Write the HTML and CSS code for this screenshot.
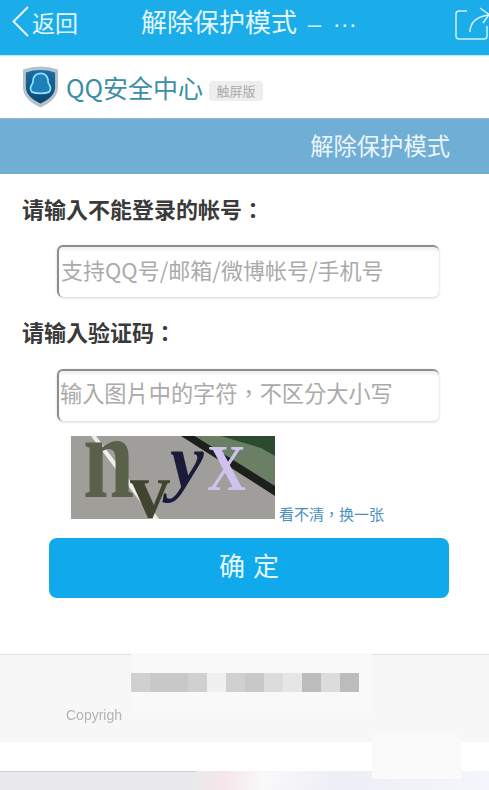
FILE: index.html
```html
<!DOCTYPE html>
<html lang="zh-CN">
<head>
<meta charset="utf-8">
<title>解除保护模式</title>
<link rel="stylesheet" href="styles.css">
</head>
<body>
<div class="page">
  <header class="topbar">
    <a class="back">
      <svg class="back-icon" viewBox="0 0 20 36"><path d="M17 3 L2.500 17.500 L17 32"/></svg>
      <span>返回</span>
    </a>
    <h1 class="title">解除保护模式 <span class="title-tail">– ···</span></h1>
    <svg class="share" viewBox="0 0 36 36"><path d="M13 4 H5 Q2 4 2 7 V29 Q2 32 5 32 H30 Q33 32 33 29 V19"/><path d="M16 25 Q16 11 34 8"/><path d="M26 1 L35 7.500 L29 16"/></svg>
  </header>

  <div class="brand">
    <svg class="shield" viewBox="0 0 40 44">
      <defs>
        <linearGradient id="sg" x1="0" y1="0" x2="0" y2="1"><stop offset="0" stop-color="#1a6ea6"/><stop offset="1" stop-color="#0b4670"/></linearGradient>
      </defs>
      <path d="M2 4 Q20 -2 38 4 V22 Q38 35 20 43 Q2 35 2 22 Z" fill="#b4c2c9"/>
      <path d="M5 7 Q20 2 35 7 V22 Q35 32 20 39 Q5 32 5 22 Z" fill="url(#sg)"/>
      <path d="M20 8 C13 8 12 14 12 18 C10 21 9 25 11 27 C15 29 25 29 29 27 C31 25 30 21 28 18 C28 14 27 8 20 8 Z" fill="#1f7fb8" stroke="#8fe0fa" stroke-width="1.800"/>
    </svg>
    <span class="brand-name">QQ安全中心</span>
    <span class="brand-tag">触屏版</span>
  </div>

  <div class="section-bar">解除保护模式</div>

  <main class="form">
    <label class="label label-first" lang="zh-Hant">请输入不能登录的帐号：</label>
    <input class="field" type="text" placeholder="支持QQ号/邮箱/微博帐号/手机号">
    <label class="label label-second" lang="zh-Hant">请输入验证码：</label>
    <input class="field field-second" lang="zh-Hant" type="text" placeholder="输入图片中的字符，不区分大小写">
    <div class="captcha-row">
      <svg class="captcha" viewBox="0 0 204 83" preserveAspectRatio="none">
        <rect width="204" height="83" fill="#a09e9a"/>
        <path d="M125 0 H204 V52 Z" fill="#6a7f64"/>
        <path d="M150 0 H204 V20 L190 12 Z" fill="#2c4a32"/>
        <path d="M110 0 H124 L204 50 V60 Z" fill="#1d1f1c"/>
        <path d="M20 0 H25 L88 83 H82 Z" fill="#eeeeea"/>
        <text class="cap cap-n" transform="translate(12 61) scale(1 1.280)">n</text>
        <text class="cap cap-v" x="59" y="81">v</text>
        <text class="cap cap-y" x="99" y="51">y</text>
        <text class="cap cap-x" transform="translate(136 54) scale(.830 1)">X</text>
      </svg>
      <a class="refresh" lang="zh-Hant">看不清，换一张</a>
    </div>
    <button class="submit" type="button">确 定</button>
  </main>

  <footer class="footer">
    <div class="smear"></div>
    <div class="pixels">
      <i class="p3"></i><i class="p2"></i><i class="p2"></i><i class="p3"></i><i class="p6"></i><i class="p3"></i><i class="p2"></i><i class="p4"></i><i class="p5"></i><i class="p1"></i><i class="p4"></i><i class="p1"></i>
    </div>
    <div class="copyright">Copyrigh</div>
    <div class="smear-low"></div>
  </footer>
  <div class="gap"></div>
  <div class="bottom"></div>
</div>
</body>
</html>
```

FILE: styles.css
```css
* { box-sizing: border-box; }
html, body { margin: 0; padding: 0; background: #fff; }
body {
  width: 489px;
  height: 790px;
  overflow: hidden;
  font-family: "Noto Sans CJK SC", "Liberation Sans", sans-serif;
}
.page { width: 489px; height: 790px; filter: blur(0.5px); }

.topbar {
  height: 56px;
  background: #1bacea;
  color: #e4f6fd;
  display: flex;
  align-items: center;
  padding: 0 0 11px 11px;
  position: relative;
  border-bottom: 1px solid #bfe9fa;
}
.back { display: flex; align-items: center; font-size: 23px; line-height: 30px; }
.back-icon { width: 20px; height: 36px; margin-right: 1px; fill: none; stroke: #e4f6fd; stroke-width: 2; }
.title { margin: 0 0 0 63px; font-size: 26px; font-weight: 400; line-height: 34px; white-space: nowrap; }
.title-tail { margin-left: 5px; font-family: "Liberation Sans", sans-serif; font-size: 24px; word-spacing: 5px; }
.share { width: 36px; height: 36px; margin-left: auto; margin-right: -1px; margin-top: 6px; fill: none; stroke: #d4f0fb; stroke-width: 1.500; }

.brand {
  height: 63px;
  display: flex;
  align-items: center;
  padding-left: 21px;
  background: #fff;
  border-bottom: 1px solid #9fb6c4;
}
.shield { width: 39px; height: 44px; flex: none; }
.brand-name { margin-left: 6px; font-size: 25px; line-height: 30px; color: #3c8da6; white-space: nowrap; }
.brand-tag {
  margin: 7px 0 0 6px;
  width: 54px;
  height: 20px;
  border-radius: 4px;
  background: #eee;
  color: #aaa;
  font-size: 13px;
  line-height: 20px;
  text-align: center;
}

.section-bar {
  height: 55px;
  background: #6fafd6;
  color: #eef5fa;
  font-size: 23.300px;
  line-height: 52px;
  text-align: right;
  padding-right: 39px;
}

.form { display: flex; flex-direction: column; align-items: flex-start; background: #fff; }
.label { display: block; margin-left: 22px; font-family: "Noto Sans CJK TC", sans-serif; font-size: 22px; line-height: 30px; font-weight: 700; color: #3a3a3a; white-space: nowrap; }
.label-first { margin-top: 19px; }
.label-second { margin-top: 19px; }
.field {
  display: block;
  width: 382px;
  height: 52px;
  margin: 22px 0 0 57px;
  padding: 0 0 6px 2px;
  border: 0;
  border-top: 2px solid #8e8e8e;
  border-left: 2px solid #8e8e8e;
  border-radius: 6px;
  box-shadow: 0 1px 3px rgba(0,0,0,.18), inset 0 3px 3px rgba(0,0,0,.06);
  background: #fff;
  font-family: inherit;
  font-size: 22px;
  color: #333;
  outline: none;
}
.field-second { margin-top: 23px; padding: 0 0 9px 1px; font-family: "Noto Sans CJK TC", sans-serif; font-size: 22.200px; }
.field::placeholder { color: #aaa; opacity: 1; }

.captcha-row { display: flex; align-items: flex-end; margin: 15px 0 0 71px; }
.captcha { width: 204px; height: 83px; display: block; overflow: visible; }
.cap { font-family: "Liberation Serif", serif; font-weight: 700; }
.cap-n { font-size: 92px; fill: #5a614a; }
.cap-v { font-size: 80px; fill: #41452f; }
.cap-y { font-size: 76px; fill: #1a1a3a; font-style: italic; }
.cap-x { font-size: 65px; fill: #cfc2ee; }
.refresh { margin: 0 0 -5px 4px; font-family: "Noto Sans CJK TC", sans-serif; font-size: 15px; line-height: 20px; color: #4a8fc0; white-space: nowrap; }

.submit {
  display: block;
  width: 400px;
  height: 60px;
  margin: 19px 0 0 49px;
  border: 0;
  border-radius: 8px;
  background: #0fa9ec;
  color: #e6f7fe;
  font-family: inherit;
  font-size: 26px;
  padding: 0 0 8px;
  word-spacing: 2px;
}

.footer {
  position: relative;
  height: 88px;
  margin-top: 56px;
  background: #f7f7f7;
  border-top: 1px solid #dedede;
  padding-top: 18px;
}
.smear { position: absolute; left: 131px; right: 117px; top: -2px; height: 60px; background: #f9f9f9; }
.smear-low { position: absolute; left: 372px; width: 90px; top: 80px; height: 44px; background: #fafafa; z-index: 1; }
.pixels { position: relative; display: flex; width: 228px; height: 19px; margin-left: 131px; }
.pixels i { display: block; flex: 1; }
.p1 { background: #bcbcbc; }
.p2 { background: #c8c8c8; }
.p3 { background: #d0d0d0; }
.p4 { background: #dcdcdc; }
.p5 { background: #e6e6e6; }
.p6 { background: #f0f0f0; }
.copyright { position: relative; margin: 14px 0 0 66px; font-family: "Liberation Sans", sans-serif; font-size: 14px; line-height: 18px; color: #b4b4b4; }

.gap { height: 29px; background: #fff; }
.bottom {
  height: 19px;
  background:
    linear-gradient(#cfcfd2, #cfcfd2) no-repeat 0 0 / 195px 1px,
    linear-gradient(100deg, #e9e9eb 0 40%, #f6e6ea 46%, #f9f9fa 54%, #eeeef6 68%, #f3f6fa 100%);
}
```
